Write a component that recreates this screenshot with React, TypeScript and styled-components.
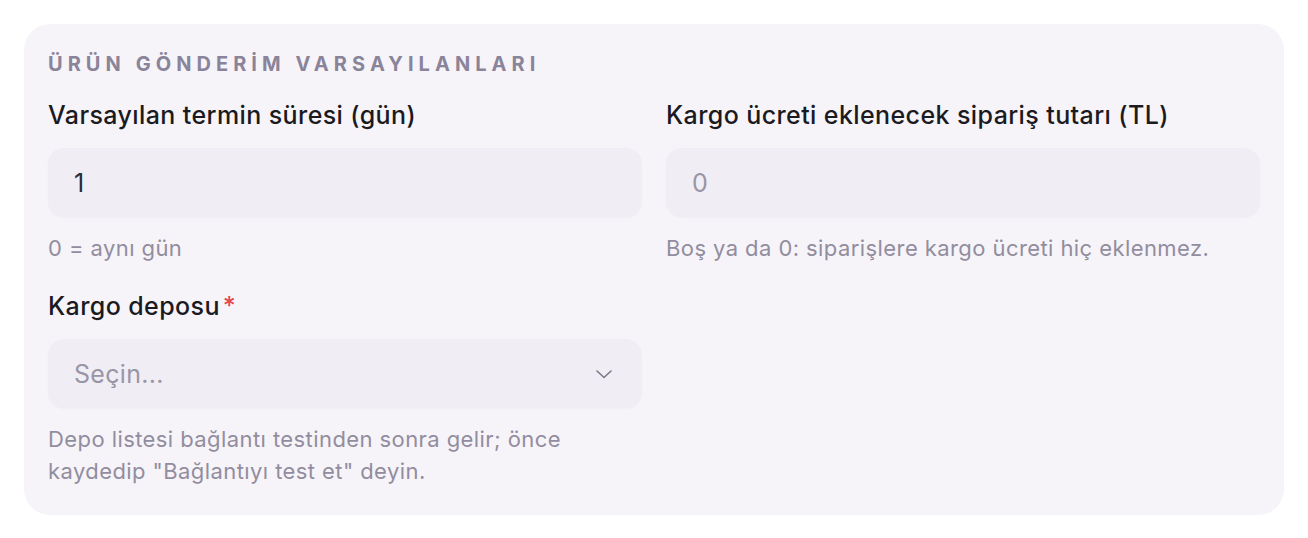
import React from "react";
import styled, { createGlobalStyle } from "styled-components";

const Global = createGlobalStyle`
  html, body { margin: 0; padding: 0; background: #ffffff; }
  body { font-family: Inter, "Noto Sans", sans-serif; -webkit-font-smoothing: antialiased; }
  * { box-sizing: border-box; }
`;

const Page = styled.div`
  padding: 24px;
`;

const Card = styled.section`
  background: #f6f4f9;
  border-radius: 26px;
  padding: 28px 24px 28px;
`;

const Title = styled.h3`
  margin: 0 0 25px;
  font-size: 20px;
  line-height: 24px;
  font-weight: 700;
  letter-spacing: 5.05px;
  color: #8a849a;
  text-transform: uppercase;
`;

const Grid = styled.div`
  display: grid;
  grid-template-columns: 1fr 1fr;
  column-gap: 24px;
  row-gap: 28px;
`;

const Field = styled.div`
  display: flex;
  flex-direction: column;
  min-width: 0;
`;

const Label = styled.label`
  font-size: 25px;
  line-height: 28px;
  font-weight: 500;
  letter-spacing: 0.4px;
  color: #1b1a21;
  margin-bottom: 19px;
`;

const Required = styled.span`
  color: #e5484d;
  margin-left: 3px;
`;

const Control = styled.div<{ $muted?: boolean }>`
  height: 69px;
  border-radius: 16px;
  background: #f0eef4;
  box-shadow: 0 1px 2px rgba(60, 50, 90, 0.03);
  display: flex;
  align-items: center;
  justify-content: space-between;
  padding: 0 28px 0 26px;
  font-size: 25px;
  font-weight: 400;
  letter-spacing: 0.3px;
  color: ${(p) => (p.$muted ? "#9a95a6" : "#2e2c35")};
`;

const Hint = styled.p`
  margin: 15px 0 0;
  font-size: 22px;
  line-height: 32px;
  letter-spacing: 0.42px;
  color: #928d9e;
`;

const Chevron = () => (
  <svg width="20" height="20" viewBox="0 0 20 20" fill="none">
    <path d="M3 7l7 6.5L17 7" stroke="#7c778a" strokeWidth="1.6" strokeLinecap="round" strokeLinejoin="round" />
  </svg>
);

export default function App() {
  return (
    <Page>
      <Global />
      <Card>
        <Title>ÜRÜN GÖNDERİM VARSAYILANLARI</Title>
        <Grid>
          <Field>
            <Label>Varsayılan termin süresi (gün)</Label>
            <Control>1</Control>
            <Hint>0 = aynı gün</Hint>
          </Field>
          <Field>
            <Label>Kargo ücreti eklenecek sipariş tutarı (TL)</Label>
            <Control $muted>0</Control>
            <Hint>Boş ya da 0: siparişlere kargo ücreti hiç eklenmez.</Hint>
          </Field>
          <Field>
            <Label>
              Kargo deposu<Required>*</Required>
            </Label>
            <Control $muted>
              <span>Seçin...</span>
              <Chevron />
            </Control>
            <Hint>
              Depo listesi bağlantı testinden sonra gelir; önce kaydedip "Bağlantıyı test et" deyin.
            </Hint>
          </Field>
        </Grid>
      </Card>
    </Page>
  );
}
